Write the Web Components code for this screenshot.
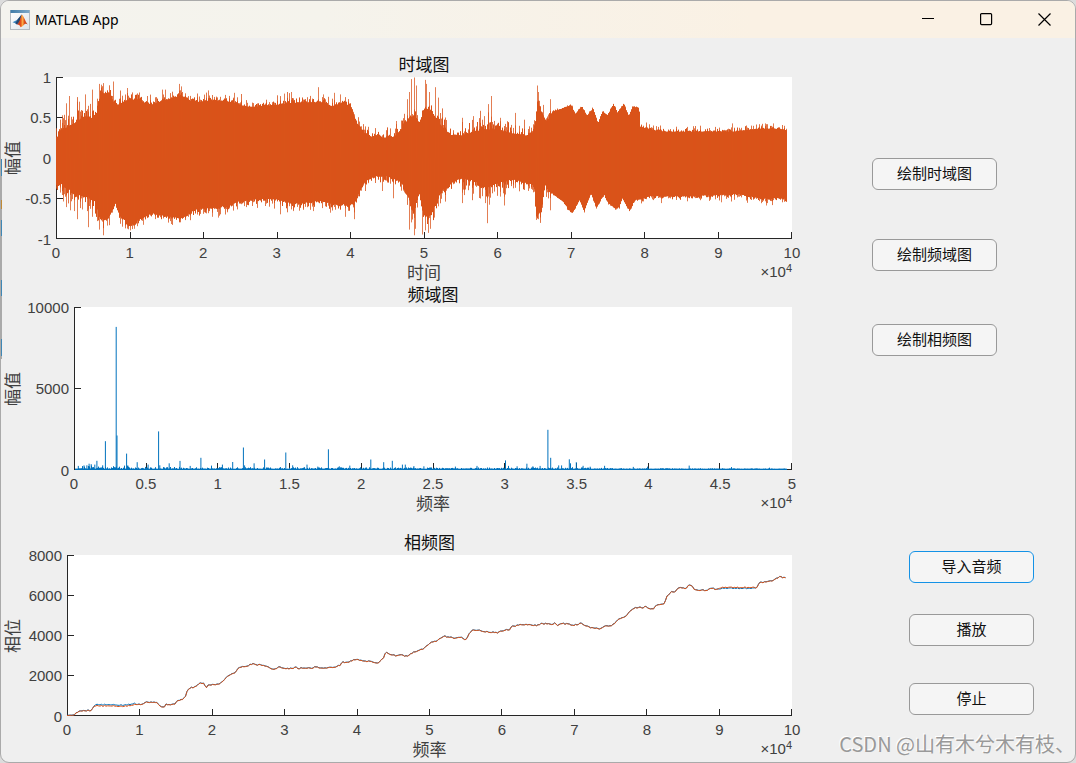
<!DOCTYPE html>
<html lang="zh-CN">
<head>
<meta charset="utf-8">
<title>MATLAB App</title>
<style>
  html { height: 100%; }
  body {
    margin: 0;
    min-height: 100%;
    display: flex;
    background: #dcdcdc;
    color: #1a1a1a;
    font-family: "Liberation Sans", "Noto Sans CJK SC", sans-serif;
  }
</style>
</head>
<body>
<app-window caption="MATLAB App">
  <chart-stack slot="charts">
    <plot-axes heading="时域图" x-label="时间" y-label="幅值" x-max="10" x-step="1"
      y-min="-1" y-max="1" y-ticks="1,0.5,0,-0.5,-1" series="wave" style="--gutter: 55px; --plot-height: 162px"></plot-axes>
    <plot-axes heading="频域图" x-label="频率" y-label="幅值" x-max="5" x-step="0.5"
      y-min="0" y-max="10000" y-ticks="10000,5000,0" series="spectrum" style="--gutter: 73px; --plot-height: 163px"></plot-axes>
    <plot-axes class="last" heading="相频图" x-label="频率" y-label="相位" x-max="10" x-step="1"
      y-min="0" y-max="8000" y-ticks="8000,6000,4000,2000,0" series="phase" style="--gutter: 66px; --plot-height: 161px"></plot-axes>
  </chart-stack>
  <control-panel slot="controls">
    <button-group slot="draw" style="--rows: 81px 85px 32px">
      <push-button>绘制时域图</push-button>
      <push-button>绘制频域图</push-button>
      <push-button>绘制相频图</push-button>
    </button-group>
    <button-group slot="audio" style="--rows: 63px 69px 32px">
      <push-button active>导入音频</push-button>
      <push-button>播放</push-button>
      <push-button>停止</push-button>
    </button-group>
  </control-panel>
  <span slot="mark">CSDN @山有木兮木有枝、</span>
</app-window>

<script>
const attach = (el, html) => {
  const t = document.createElement('template');
  t.innerHTML = html;
  const root = el.attachShadow({ mode: 'open' });
  root.append(t.content.cloneNode(true));
  return root;
};

/* Repeatable pseudo-random numbers for the sampled signals */
const rng = seed => () => {
  seed = (seed * 1664525 + 1013904223) >>> 0;
  return seed / 4294967296;
};

const lerpAt = (pts, x) => {
  for (let i = 1; i < pts.length; i++) {
    if (x <= pts[i][0]) {
      const [x0, y0] = pts[i - 1], [x1, y1] = pts[i];
      return y0 + (y1 - y0) * (x - x0) / (x1 - x0);
    }
  }
  return pts[pts.length - 1][1];
};

const ORANGE = '#d95319', BLUE = '#0072bd';

/* ---- time-domain envelope: [time, amplitude] ---- */
const UPPER = [[0,.24],[.04,.34],[.2,.4],[.3,.48],[.4,.53],[.5,.5],[.55,.58],[.6,.8],[.7,.82],[.78,.7],[.85,.66],[1,.74],[1.3,.67],[1.5,.73],[1.7,.78],[1.85,.69],[2.1,.72],[2.4,.7],[2.55,.64],[2.8,.64],[3,.66],[3.2,.69],[3.6,.7],[3.75,.64],[3.9,.7],[4,.64],[4.1,.42],[4.2,.29],[4.4,.25],[4.6,.27],[4.75,.42],[4.8,.5],[4.9,.5],[4.93,.4],[5,.62],[5.1,.58],[5.2,.45],[5.3,.35],[5.4,.27],[5.6,.31],[5.8,.36],[6,.36],[6.2,.31],[6.4,.28],[6.5,.33],[6.55,.68],[6.62,.52],[6.67,.44],[6.75,.58],[6.9,.62],[7,.66],[7.06,.55],[7.15,.64],[7.22,.52],[7.3,.62],[7.37,.43],[7.43,.58],[7.5,.53],[7.58,.67],[7.63,.56],[7.72,.67],[7.79,.52],[7.84,.64],[7.93,.62],[7.94,.39],[8.1,.35],[8.3,.33],[9.2,.33],[9.6,.37],[9.94,.35]];
const LOWER = [[0,.27],[.1,.36],[.3,.47],[.5,.5],[.6,.76],[.7,.76],[.8,.57],[.85,.7],[1,.85],[1.1,.78],[1.3,.69],[1.5,.73],[1.7,.75],[1.9,.64],[2.2,.62],[2.5,.54],[2.8,.51],[3,.52],[3.2,.57],[3.4,.55],[3.6,.54],[3.8,.58],[4.05,.58],[4.1,.47],[4.2,.29],[4.35,.23],[4.5,.23],[4.7,.31],[4.8,.52],[4.87,.68],[4.93,.42],[5,.72],[5.1,.72],[5.2,.47],[5.3,.35],[5.5,.26],[5.7,.29],[5.85,.38],[6,.32],[6.2,.27],[6.5,.34],[6.53,.7],[6.6,.66],[6.65,.33],[6.7,.42],[6.76,.45],[6.9,.55],[7,.68],[7.03,.67],[7.12,.52],[7.18,.67],[7.27,.43],[7.35,.62],[7.45,.45],[7.5,.55],[7.6,.63],[7.66,.61],[7.7,.5],[7.8,.66],[7.87,.52],[7.95,.51],[8.1,.47],[8.5,.48],[9.3,.45],[9.6,.5],[9.94,.5]];
const NOISE = [[0,.16],[.5,.22],[.9,.12],[1.3,.1],[3,.11],[3.9,.13],[4.2,.12],[4.7,.15],[5.2,.18],[5.8,.2],[6.5,.15],[6.7,.1],[6.76,.02],[7.93,.02],[7.96,.06],[9.94,.07]];
const PEAKS = [[.08,.53],[.13,.68],[.18,.77],[.29,.7],[.31,.7],[.4,.79],[.49,.85],[.58,.92],[.61,.91],[.64,.93],[.78,.95],[.97,.87],[1.44,.85],[1.48,.85],[1.67,.92],[1.7,.89],[2.07,.84],[2.42,.81],[3.2,.82],[3.1,.8],[3.56,.88],[3.63,.79],[3.78,.81],[3.86,.79],[4.5,.38],[4.62,.46],[4.77,.73],[4.8,.82],[4.83,.98],[4.87,1],[4.9,.9],[5.02,.97],[5.04,.92],[5.08,.82],[5.16,.88],[5.2,.75],[5.53,.5],[5.68,.52],[5.82,.52],[5.88,.67],[5.92,.77],[6.04,.5],[6.25,.56],[6.54,.9],[6.56,.82],[6.62,.66],[6.72,.73],[9.2,.43],[9.64,.43],[9.76,.43],
  [.05,-.43],[.09,-.54],[.14,-.61],[.19,-.65],[.24,-.66],[.29,-.76],[.36,-.64],[.43,-.86],[.49,-.73],[.59,-.89],[.64,-.96],[.7,-.84],[1,-.9],[1.06,-.88],[1.18,-.83],[1.57,-.82],[1.68,-.8],[2.12,-.73],[2.2,-.74],[3.05,-.7],[3.23,-.66],[3.5,-.66],[3.73,-.68],[3.93,-.73],[4.05,-.76],[4.44,-.41],[4.58,-.5],[4.8,-.89],[4.83,-.8],[4.87,-.96],[4.89,-.88],[4.98,-.95],[5.02,-.9],[5.06,-.93],[5.09,-.88],[5.14,-.74],[5.2,-.6],[5.52,-.56],[5.83,-.56],[5.86,-.81],[5.89,-.58],[6.04,-.48],[6.1,-.59],[6.53,-.77],[6.56,-.76],[6.59,-.74],[6.72,-.65],[8.23,-.56],[9.05,-.55],[9.66,-.59]];

/* ---- spectrum: [frequency, magnitude] ---- */
const TONES = [[.03,220],[.07,250],[.09,260],[.105,360],[.12,330],[.145,300],[.16,540],[.2,260],[.219,1750],[.294,8800],[.3,2100],[.367,980],[.375,250],[.441,450],[.517,300],[.59,2350],[.598,260],[.664,380],[.739,530],[.81,220],[.885,720],[.959,240],[1.035,300],[1.107,460],[1.181,1360],[1.19,250],[1.256,380],[1.329,620],[1.477,1050],[1.525,260],[1.625,300],[1.7,180],[1.774,1250],[1.85,200],[1.923,240],[2.07,620],[2.16,450],[2.22,540],[2.29,300],[2.31,300],[2.37,210],[2.44,200],[2.66,180],[2.81,220],[3.009,560],[3.03,220],[3.09,200],[3.158,360],[3.2,200],[3.25,220],[3.305,2450],[3.324,720],[3.38,250],[3.4,250],[3.454,630],[3.462,380],[3.503,450],[3.55,230],[3.6,170],[3.7,230],[3.9,160],[4,180],[4.29,240],[4.585,150],[4.85,110]];
const FLOOR = [[0,60],[.04,200],[.15,230],[.35,210],[.4,130],[1,100],[2,90],[2.6,70],[3.6,100],[3.8,40],[4.97,20]];

/* ---- unwrapped phase: pairs on a 2176 x 480 grid, y downwards ---- */
const TRACE = [0,480, 20,479, 30,470, 48,465, 73,464, 83,450, 98,451, 178,452, 198,448, 228,445, 232,440, 268,439, 283,454, 292,456, 296,446, 325,447, 328,437, 348,430, 356,424, 363,401, 376,396, 390,393, 393,385, 409,383, 420,396, 426,387, 448,388, 466,380, 478,366, 491,356, 503,353, 514,338, 528,333, 543,331, 558,324, 573,328, 590,328, 608,336, 618,342, 636,335, 663,340, 688,335, 693,341, 703,336, 728,338, 753,334, 763,338, 788,337, 818,331, 830,319, 843,321, 863,312, 883,314, 913,319, 936,322, 951,307, 958,289, 973,297, 988,300, 998,298, 1023,302, 1043,290, 1073,279, 1088,264, 1108,257, 1133,242, 1163,247, 1183,244, 1201,254, 1206,237, 1221,222, 1248,227, 1293,232, 1318,222, 1330,224, 1336,213, 1373,206, 1408,210, 1428,204, 1460,207, 1466,203, 1473,209, 1493,204, 1523,210, 1543,203, 1570,216, 1601,220, 1613,212, 1638,210, 1658,191, 1678,183, 1698,162, 1710,156, 1733,156, 1739,150, 1750,161, 1763,159, 1770,150, 1795,144, 1803,121, 1818,108, 1830,108, 1836,97, 1863,99, 1868,87, 1876,90, 1888,103, 1925,105, 1930,98, 1953,101, 1968,95, 2073,96, 2081,81, 2113,78, 2143,64, 2160,67];

const stroke = (d, colour, extra = '') =>
  `<path d="${d}" fill="none" stroke="${colour}" stroke-width="1" ${extra}/>`;

const SERIES = {
  wave(X, Y) {
    const rand = rng(7), last = Math.floor(X(9.94));
    let body = '', fringe = '';
    for (let px = 0; px <= last; px++) {
      const x = px + .5, t = px / X(10) * 10, n = lerpAt(NOISE, t);
      const up = lerpAt(UPPER, t) + n * (.8 * rand() * rand() - .05);
      const down = lerpAt(LOWER, t) + n * (.8 * rand() * rand() - .05);
      body += `M${x} ${Y(up).toFixed(1)}V${Y(-down).toFixed(1)}`;
      if (rand() < .35) fringe += `M${x} ${Y(up + n * .8 * rand()).toFixed(1)}V${Y(-down - n * .8 * rand()).toFixed(1)}`;
    }
    let spikes = '';
    for (const [t, a] of PEAKS) spikes += `M${Math.round(X(t)) + .5} ${Y(0)}V${Y(a).toFixed(1)}`;
    return stroke(body, ORANGE) +
      stroke(fringe, ORANGE, 'stroke-opacity=".8"') +
      stroke(spikes, ORANGE, 'stroke-opacity=".75"');
  },
  spectrum(X, Y) {
    const rand = rng(21);
    let floor = '', tones = '';
    for (let px = 1; px < X(4.97); px++) {
      const r = rand();
      floor += `M${px + .5} ${Y(0) + .5}V${Y(50 + lerpAt(FLOOR, px / X(5) * 5) * r * r).toFixed(1)}`;
    }
    for (const [f, a] of TONES) tones += `M${X(f).toFixed(1)} ${Y(0)}V${Y(a).toFixed(1)}`;
    return stroke(floor, BLUE) + stroke(tones, BLUE);
  },
  phase(X, Y) {
    const rand = rng(5), pts = [];
    for (let i = 0; i < TRACE.length; i += 2) pts.push([TRACE[i] / 217.6, (480 - TRACE[i + 1]) / .06]);
    let a = '', b = '';
    for (let px = 0; px <= X(9.93); px += 1.5) {
      const t = px / X(10) * 10, y = lerpAt(pts, t) + (t > .1 ? (rand() - .6) * 60 : 0);
      const lift = t > .38 && t < .95 ? 60 : t > 9 && t < 9.5 ? -40 : 10;
      a += `${px ? 'L' : 'M'}${px} ${Y(y + lift).toFixed(1)}`;
      b += `${px ? 'L' : 'M'}${px} ${Y(y).toFixed(1)}`;
    }
    return stroke(a, BLUE) + stroke(b, ORANGE);
  }
};

customElements.define('plot-axes', class extends HTMLElement {
  connectedCallback() {
    if (this.shadowRoot) return;
    const g = n => this.getAttribute(n);
    const xMax = +g('x-max'), step = +g('x-step');
    const xs = Array.from({ length: Math.round(xMax / step) + 1 }, (_, i) => i * step);
    const ys = g('y-ticks').split(',');
    const root = attach(this, `
      <style>
        :host { display: block; color: #404040; }
        figure {
          margin: 0;
          display: grid;
          grid-template-columns: 26px calc(var(--gutter) - 26px) minmax(0, 1fr);
          grid-template-rows: 24px var(--plot-height) 24px 20px;
        }
        h2 { grid-area: 1 / 3; margin: 0; font-size: 17px; line-height: 26px; font-weight: 400; text-align: center; color: #111; }
        .ylabel { grid-area: 2 / 1; display: flex; align-items: center; justify-content: center; }
        .ylabel span { writing-mode: vertical-rl; text-orientation: sideways; transform: rotate(180deg); font-size: 17px; line-height: 20px; }
        ol { list-style: none; margin: 0; padding: 0; display: flex; justify-content: space-between; font-size: 15px; }
        .y { grid-area: 2 / 2; flex-direction: column; text-align: right; padding-right: 5px; }
        .y li { height: 0; display: flex; align-items: center; justify-content: flex-end; }
        .x { grid-area: 3 / 3; line-height: 28px; }
        .x li { width: 0; display: flex; justify-content: center; }
        .canvas { grid-area: 2 / 3; background: #fff; min-width: 0; overflow: hidden; }
        svg { display: block; width: 100%; height: 100%; }
        .foot { grid-area: 4 / 3; display: grid; grid-template-columns: 1fr auto 1fr; line-height: 22px; }
        .xlabel { grid-column: 2; font-size: 17px; }
        .exp { grid-column: 3; text-align: right; font-size: 15px; line-height: 18px; }
        sup { font-size: 11px; line-height: 0; vertical-align: 5px; }
      </style>
      <figure>
        <h2>${g('heading')}</h2>
        <div class="ylabel"><span>${g('y-label')}</span></div>
        <ol class="y">${ys.map(v => `<li>${v}</li>`).join('')}</ol>
        <div class="canvas"><svg aria-hidden="true"></svg></div>
        <ol class="x">${xs.map(v => `<li>${v}</li>`).join('')}</ol>
        <div class="foot"><span class="xlabel">${g('x-label')}</span><span class="exp">×10<sup>4</sup></span></div>
      </figure>`);
    const svg = root.querySelector('svg');
    const yMin = +g('y-min'), yMax = +g('y-max');
    const draw = () => {
      const w = svg.clientWidth, h = svg.clientHeight;
      if (!w || !h) return;
      const X = v => v / xMax * (w - 1);
      const Y = v => .5 + (yMax - v) / (yMax - yMin) * (h - 1);
      let axes = `M.5 0V${h}M0 ${h - .5}H${w}`;
      for (const v of xs) axes += `M${Math.round(X(v)) + .5} ${h}v-7`;
      for (const v of ys) axes += `M0 ${Math.floor(Y(+v)) + .5}h7`;
      svg.innerHTML = stroke(axes, '#262626') + SERIES[g('series')](X, Y);
    };
    draw();
    new ResizeObserver(draw).observe(svg);
  }
});

customElements.define('chart-stack', class extends HTMLElement {
  constructor() {
    super();
    attach(this, `
      <style>
        :host { display: block; padding-top: 15px; }
        ::slotted(.last) { margin-top: 17px; }
      </style>
      <slot></slot>`);
  }
});

customElements.define('push-button', class extends HTMLElement {
  constructor() {
    super();
    attach(this, `
      <style>
        :host { display: block; }
        button {
          box-sizing: border-box; width: 125px; height: 32px; padding: 0;
          border: 1px solid #999; border-radius: 6px; background: #f5f5f5; color: #111;
          font: inherit; font-size: 15px; line-height: 20px;
        }
        :host([active]) button { border-color: #1492e6; }
      </style>
      <button type="button"><slot></slot></button>`);
  }
});

customElements.define('button-group', class extends HTMLElement {
  constructor() {
    super();
    attach(this, `
      <style>:host { display: grid; grid-template-rows: var(--rows); }</style>
      <slot></slot>`);
  }
});

customElements.define('control-panel', class extends HTMLElement {
  constructor() {
    super();
    attach(this, `
      <style>
        :host { display: flex; flex-direction: column; gap: 195px; padding-top: 120px; }
        .draw { padding-left: 80px; }
        .audio { padding-left: 117px; }
      </style>
      <div class="draw"><slot name="draw"></slot></div>
      <div class="audio"><slot name="audio"></slot></div>`);
  }
});

customElements.define('title-bar', class extends HTMLElement {
  constructor() {
    super();
    attach(this, `
      <style>
        :host {
          display: flex; align-items: center; height: 37px; padding: 0 2px 0 9px;
          background: linear-gradient(90deg, #f4f3ee, #f5f3ec 30%, #faf1e4 70%);
        }
        .icon { width: 20px; height: 20px; display: block; }
        h1 { flex: 1; margin: 0 0 0 5px; font: 400 14px/20px "Noto Sans", "Open Sans", sans-serif; color: #000; }
        button { width: 58px; height: 37px; border: 0; padding: 0; background: none; display: grid; place-items: center; }
      </style>
      <svg class="icon" viewBox="0 0 20 20" aria-hidden="true">
        <defs>
          <linearGradient id="f" x1="0" y1="0" x2="1" y2="1"><stop offset="0" stop-color="#fff"/><stop offset="1" stop-color="#dde4ea"/></linearGradient>
          <linearGradient id="t" x1="0" y1="0" x2="1" y2="0"><stop offset="0" stop-color="#3f7ba8"/><stop offset="1" stop-color="#7fa9c8"/></linearGradient>
          <linearGradient id="m" x1="0" y1="0" x2="1" y2="0"><stop offset="0" stop-color="#b5281c"/><stop offset=".35" stop-color="#e8541a"/><stop offset=".52" stop-color="#fbb04a"/><stop offset=".68" stop-color="#e0521c"/><stop offset="1" stop-color="#b0301a"/></linearGradient>
        </defs>
        <rect x=".5" y=".5" width="19" height="19" fill="url(#f)" stroke="#b4bac0"/>
        <rect x=".5" y="0" width="19" height="3" fill="url(#t)"/>
        <path d="M2.500 12.200 6.500 10.200 8.600 8.200C9.800 7.200 10.600 5.400 11.800 4.500L10 11 7 14.600 5.300 13.300z" fill="#3b86c0"/>
        <path d="M5.300 13.300 8.600 8.200 11.800 4.500 9.800 11.200 7 14.600z" fill="#27466f"/>
        <path d="M11.800 4.500C13.500 5.500 15 11 17.800 14.600 16 13.400 15 13.600 13.800 15 12.800 16.200 11.700 17 10.500 17.300 10 15.400 8.900 14.400 7 14.600 9.400 12.800 10.500 8 11.800 4.500z" fill="url(#m)"/>
      </svg>
      <h1><slot></slot></h1>
      <button type="button" aria-label="最小化"><svg width="13" height="13" aria-hidden="true"><path d="M0 5.500h12" stroke="#000"/></svg></button>
      <button type="button" aria-label="最大化"><svg width="13" height="13" fill="none" aria-hidden="true"><rect x=".6" y=".6" width="11" height="11" rx="1" stroke="#000" stroke-width="1.200"/></svg></button>
      <button type="button" aria-label="关闭"><svg width="13" height="13" aria-hidden="true"><path d="M.5.5l12 12M12.500.500l-12 12" stroke="#000" stroke-width="1.200"/></svg></button>`);
  }
});

customElements.define('app-window', class extends HTMLElement {
  constructor() {
    super();
    attach(this, `
      <style>
        :host {
          position: relative; flex: 1; display: flex; flex-direction: column; box-sizing: border-box;
          min-width: 0; min-height: 100%; overflow: hidden;
          border: 1px solid #aaa; border-radius: 9px; background: #efefef;
        }
        main { flex: 1; display: grid; grid-template-columns: minmax(0, 1fr) 283px; }
        /* sliver of the desktop visible along the left frame edge */
        :host::before {
          content: ""; position: absolute; z-index: 1; left: 0; top: 158px; width: 1px; height: 200px;
          background: linear-gradient(#3f87b5 0 17px, #aaa 0 41px, #c08a35 0 50px, #aaa 0 61px, #3f87b5 0 77px, #aaa 0 121px, #3f87b5 0 137px, #aaa 0 180px, #3f87b5 0 197px, #aaa 0);
        }
        .mark {
          position: absolute; right: 0; bottom: 3px; font: 20px/30px "Liberation Sans Narrow", "Noto Sans CJK SC", sans-serif; white-space: nowrap;
          color: #999; text-shadow: -1px -1px 0 #fff;
        }
      </style>
      <title-bar></title-bar>
      <main><slot name="charts"></slot><slot name="controls"></slot></main>
      <div class="mark"><slot name="mark"></slot></div>`);
  }
  connectedCallback() {
    this.shadowRoot.querySelector('title-bar').textContent = this.getAttribute('caption');
  }
});
</script>
</body>
</html>
